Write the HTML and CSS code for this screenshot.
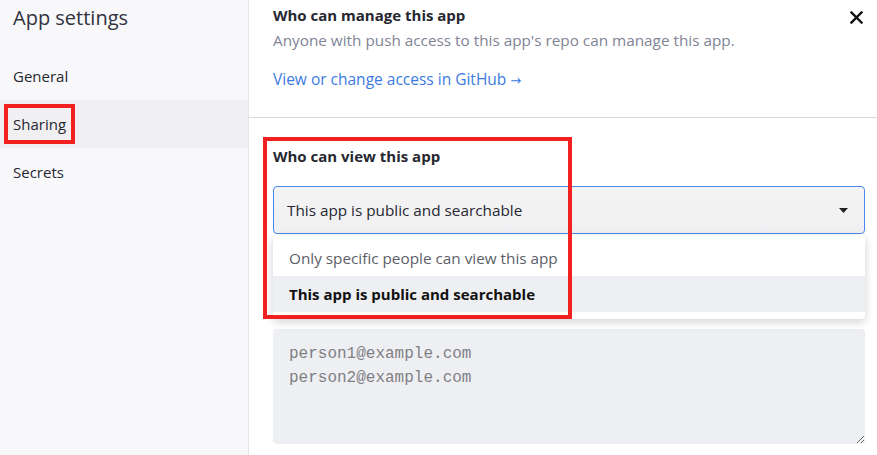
FILE: index.html
```html
<!DOCTYPE html>
<html>
<head>
<meta charset="utf-8">
<link rel="stylesheet" href="styles.css">
</head>
<body>
<div class="app">
  <aside class="sidebar">
    <h1 class="title">App settings</h1>
    <nav class="nav">
      <div class="nav-item">General</div>
      <div class="nav-item active"><span class="mark">Sharing</span></div>
      <div class="nav-item">Secrets</div>
    </nav>
  </aside>
  <main class="main">
    <button class="close" aria-label="Close">
      <svg width="13" height="13" viewBox="0 0 13 13"><path d="M1.5 1.5 L11.5 11.5 M11.5 1.5 L1.5 11.5" stroke="#111" stroke-width="2.4" stroke-linecap="square"/></svg>
    </button>
    <section class="section top">
      <h2 class="heading">Who can manage this app</h2>
      <p class="desc">Anyone with push access to this app's repo can manage this app.</p>
      <a class="link" href="#">View or change access in GitHub <span class="arrow">→</span></a>
    </section>
    <section class="section view">
      <div class="highlight"></div>
      <h2 class="heading">Who can view this app</h2>
      <div class="select">
        <span>This app is public and searchable</span>
        <svg class="caret" width="9" height="5" viewBox="0 0 9 5"><path d="M0 0 H9 L4.5 5 Z" fill="#222"/></svg>
      </div>
      <div class="menu">
        <div class="option">Only specific people can view this app</div>
        <div class="option selected">This app is public and searchable</div>
      </div>
      <textarea class="emails" placeholder="person1@example.com&#10;person2@example.com"></textarea>
    </section>
  </main>
</div>
</body>
</html>
```
FILE: styles.css
```css
* { box-sizing: border-box; }
html, body { margin: 0; padding: 0; }
body {
  font-family: "Open Sans", "Noto Sans", sans-serif;
  color: #262730;
  background: #fff;
  width: 877px;
  height: 455px;
  overflow: hidden;
}
.app { display: flex; height: 455px; }
.sidebar {
  width: 249px;
  flex: none;
  background: #f8f8fa;
  border-right: 1px solid #e4e4ea;
}
.title {
  margin: 0;
  padding: 4px 13px 0;
  font-size: 20px;
  font-weight: 400;
  line-height: 27px;
  color: #31333f;
}
.nav { margin-top: 21px; }
.nav-item {
  height: 48px;
  display: flex;
  align-items: center;
  padding-left: 13px;
  font-size: 15px;
  color: #262730;
}
.nav-item.active { background: #f0f0f3; }
.mark {
  margin-left: -9px;
  padding: 5px 5px 5px 5px;
  line-height: 22px;
  border: 4px solid #f2201e;
}
.main { flex: 1; position: relative; }
.close {
  position: absolute;
  right: 14px;
  top: 11px;
  border: 0;
  background: none;
  padding: 0;
  width: 13px;
  height: 13px;
}
.close svg { display: block; }
.section { padding: 0 12px 0 24px; }
.top {
  padding-top: 5px;
  height: 118px;
  border-bottom: 1px solid #d9d9e2;
}
.heading {
  margin: 0;
  font-size: 15px;
  font-weight: 700;
  line-height: 20px;
  color: #262730;
}
.desc {
  margin: 5px 0 0;
  font-size: 15.3px;
  line-height: 20px;
  color: #808495;
}
.link {
  display: inline-block;
  margin-top: 19px;
  font-size: 15.5px;
  line-height: 20px;
  color: #3d7be0;
  text-decoration: none;
}
.arrow { font-family: "DejaVu Sans", sans-serif; font-size: 13px; }
.view { position: relative; padding-top: 27px; }
.highlight {
  position: absolute;
  left: 14px;
  top: 19px;
  width: 309px;
  height: 182px;
  border: 4px solid #f2201e;
  z-index: 3;
  pointer-events: none;
}
.view .heading { line-height: 22px; }
.select {
  margin-top: 19px;
  height: 48px;
  border: 1px solid #4a8af0;
  border-radius: 4px;
  background: linear-gradient(#f4f4f5, #f0f0f2);
  display: flex;
  align-items: center;
  justify-content: space-between;
  padding: 0 16px 0 13px;
  font-size: 15.3px;
  color: #262730;
}
.caret { display: block; }
.menu {
  position: relative;
  z-index: 2;
  margin-top: 1px;
  background: #fff;
  border-radius: 4px;
  box-shadow: 0 3px 10px rgba(0,0,0,0.18);
  padding: 5px 0 7px;
}
.option {
  height: 36px;
  display: flex;
  align-items: center;
  padding-left: 16px;
  font-size: 15.3px;
  color: #5c5e68;
}
.option.selected {
  background: #eeeff3;
  font-weight: 700;
  font-size: 15px;
  color: #111;
}
.emails {
  display: block;
  margin-top: 10px;
  width: 100%;
  height: 115px;
  border: 0;
  border-radius: 4px;
  background: #eeeff3;
  padding: 13px 16px;
  font-family: "Liberation Mono", monospace;
  font-size: 16px;
  line-height: 24px;
  resize: vertical;
  outline: none;
}
.emails::placeholder { color: #7f7f84; }
```
